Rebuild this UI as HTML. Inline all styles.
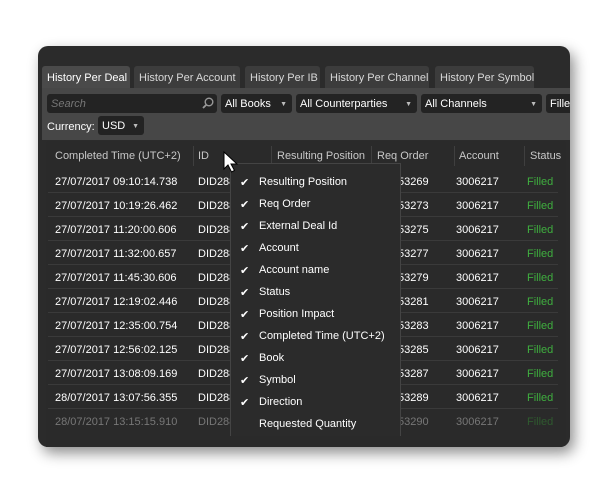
<!DOCTYPE html>
<html><head><style>
*{margin:0;padding:0;box-sizing:border-box}
body{width:610px;height:483px;background:#fff;font-family:"Liberation Sans",Arial,sans-serif;font-size:11px;position:relative;overflow:hidden}
.panel{position:absolute;left:38px;top:46px;width:532px;height:401px;background:#2b2b2b;border-radius:10px;box-shadow:4px 6px 14px rgba(0,0,0,.45);overflow:hidden}
.abs{position:absolute}
.tab{position:absolute;top:20px;height:22px;background:#3c3c3c;color:#d8d8d8;line-height:24px;padding:0 5px;border-radius:3px 3px 0 0;white-space:nowrap}
.tab.on{background:#4a4a4a;color:#fff}
.band{position:absolute;left:4px;top:42px;width:528px;height:52px;background:#474747}
.sel{position:absolute;top:48px;height:19px;background:#232323;border-radius:3px;color:#fff;line-height:21px;padding-left:4px;white-space:nowrap;overflow:hidden}
.sel .ar{position:absolute;right:5px;top:0;font-size:7px;color:#bbb}
.tbl{position:absolute;left:8px;top:95px;width:520px;height:306px;background:#2a2a2a;border-radius:4px 4px 0 0}
.h{position:absolute;top:104px;color:#c8c8c8;white-space:nowrap}
.vs{position:absolute;top:100px;width:1px;height:20px;background:#3f3f3f}
.row{position:absolute;left:10px;width:510px;height:24px;border-bottom:1px solid #3a3a3a;color:#fff}
.row span{position:absolute;top:7px;white-space:nowrap}
.g{color:#3fae3f}
.menu{position:absolute;left:192px;top:117px;width:171px;height:273px;background:#2b2b2b;border:1px solid #444;border-bottom:none}
.mi{position:absolute;left:28px;color:#fff;white-space:nowrap}
.ck{position:absolute;left:9px;color:#fff;font-size:11px}
</style></head><body>
<div class="panel">
 <div class="tab on" style="left:4px;width:88px">History Per Deal</div>
 <div class="tab" style="left:96px;width:106px">History Per Account</div>
 <div class="tab" style="left:207px;width:75px">History Per IB</div>
 <div class="tab" style="left:287px;width:104px">History Per Channel</div>
 <div class="tab" style="left:397px;width:99px">History Per Symbol</div>
 <div class="band"></div>
 <div class="sel" style="left:9px;width:170px;color:#777;font-style:italic">Search<svg class="abs" style="left:155px;top:3px" width="12" height="12" viewBox="0 0 12 12"><circle cx="7" cy="5" r="3.8" fill="none" stroke="#999" stroke-width="1.4"/><line x1="4.3" y1="7.7" x2="1" y2="11" stroke="#999" stroke-width="1.8"/></svg></div>
 <div class="sel" style="left:183px;width:71px">All Books<span class="ar">▼</span></div>
 <div class="sel" style="left:258px;width:121px">All Counterparties<span class="ar">▼</span></div>
 <div class="sel" style="left:383px;width:121px">All Channels<span class="ar">▼</span></div>
 <div class="sel" style="left:508px;width:30px">Filled</div>
 <div class="abs" style="left:9px;top:75px;color:#fff">Currency:</div>
 <div class="sel" style="left:60px;top:70px;width:46px">USD<span class="ar">▼</span></div>
 <div class="tbl"></div>
 <div class="h" style="left:17px">Completed Time (UTC+2)</div>
 <div class="vs" style="left:155px"></div>
 <div class="h" style="left:160px">ID</div>
 <div class="vs" style="left:233px"></div>
 <div class="h" style="left:239px">Resulting Position</div>
 <div class="vs" style="left:333px"></div>
 <div class="h" style="left:339px">Req Order</div>
 <div class="vs" style="left:416px"></div>
 <div class="h" style="left:421px">Account</div>
 <div class="vs" style="left:486px"></div>
 <div class="h" style="left:492px">Status</div>

 <div class="row" style="top:123px"><span style="left:7px">27/07/2017 09:10:14.738</span><span style="left:150px">DID288</span><span style="left:350px">53269</span><span style="left:408px">3006217</span><span class="g" style="left:479px">Filled</span></div>
 <div class="row" style="top:147px"><span style="left:7px">27/07/2017 10:19:26.462</span><span style="left:150px">DID288</span><span style="left:350px">53273</span><span style="left:408px">3006217</span><span class="g" style="left:479px">Filled</span></div>
 <div class="row" style="top:171px"><span style="left:7px">27/07/2017 11:20:00.606</span><span style="left:150px">DID288</span><span style="left:350px">53275</span><span style="left:408px">3006217</span><span class="g" style="left:479px">Filled</span></div>
 <div class="row" style="top:195px"><span style="left:7px">27/07/2017 11:32:00.657</span><span style="left:150px">DID288</span><span style="left:350px">53277</span><span style="left:408px">3006217</span><span class="g" style="left:479px">Filled</span></div>
 <div class="row" style="top:219px"><span style="left:7px">27/07/2017 11:45:30.606</span><span style="left:150px">DID288</span><span style="left:350px">53279</span><span style="left:408px">3006217</span><span class="g" style="left:479px">Filled</span></div>
 <div class="row" style="top:243px"><span style="left:7px">27/07/2017 12:19:02.446</span><span style="left:150px">DID288</span><span style="left:350px">53281</span><span style="left:408px">3006217</span><span class="g" style="left:479px">Filled</span></div>
 <div class="row" style="top:267px"><span style="left:7px">27/07/2017 12:35:00.754</span><span style="left:150px">DID288</span><span style="left:350px">53283</span><span style="left:408px">3006217</span><span class="g" style="left:479px">Filled</span></div>
 <div class="row" style="top:291px"><span style="left:7px">27/07/2017 12:56:02.125</span><span style="left:150px">DID288</span><span style="left:350px">53285</span><span style="left:408px">3006217</span><span class="g" style="left:479px">Filled</span></div>
 <div class="row" style="top:315px"><span style="left:7px">27/07/2017 13:08:09.169</span><span style="left:150px">DID288</span><span style="left:350px">53287</span><span style="left:408px">3006217</span><span class="g" style="left:479px">Filled</span></div>
 <div class="row" style="top:339px"><span style="left:7px">28/07/2017 13:07:56.355</span><span style="left:150px">DID288</span><span style="left:350px">53289</span><span style="left:408px">3006217</span><span class="g" style="left:479px">Filled</span></div>
 <div class="row" style="top:363px;color:#777;border:none"><span style="left:7px">28/07/2017 13:15:15.910</span><span style="left:150px">DID288</span><span style="left:350px">53290</span><span style="left:408px">3006217</span><span style="left:479px;color:#2f5a2f">Filled</span></div>

 <div class="menu">
  <span class="ck" style="top:12px">✔</span><span class="mi" style="top:12px">Resulting Position</span>
  <span class="ck" style="top:34px">✔</span><span class="mi" style="top:34px">Req Order</span>
  <span class="ck" style="top:56px">✔</span><span class="mi" style="top:56px">External Deal Id</span>
  <span class="ck" style="top:78px">✔</span><span class="mi" style="top:78px">Account</span>
  <span class="ck" style="top:100px">✔</span><span class="mi" style="top:100px">Account name</span>
  <span class="ck" style="top:122px">✔</span><span class="mi" style="top:122px">Status</span>
  <span class="ck" style="top:144px">✔</span><span class="mi" style="top:144px">Position Impact</span>
  <span class="ck" style="top:166px">✔</span><span class="mi" style="top:166px">Completed Time (UTC+2)</span>
  <span class="ck" style="top:188px">✔</span><span class="mi" style="top:188px">Book</span>
  <span class="ck" style="top:210px">✔</span><span class="mi" style="top:210px">Symbol</span>
  <span class="ck" style="top:232px">✔</span><span class="mi" style="top:232px">Direction</span>
  <span class="mi" style="top:254px">Requested Quantity</span>
 </div>
 <svg class="abs" style="left:185px;top:105px" width="20" height="24" viewBox="0 0 20 24"><path d="M1 1 L1 18 L5 14 L8.5 21 L11.5 19.5 L8 13 L14 13 Z" fill="#fff" stroke="#000" stroke-width="1"/></svg>
</div>
</body></html>
